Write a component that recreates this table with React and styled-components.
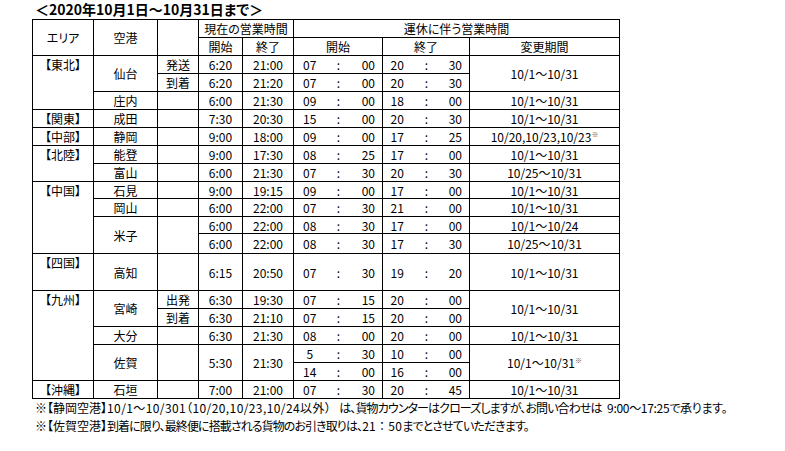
import React from "react";
import styled, { createGlobalStyle } from "styled-components";

const GlobalStyle = createGlobalStyle`
  body {
    margin: 0;
    background: #fff;
    color: #000;
    font-family: "Noto Sans CJK JP", sans-serif;
    font-feature-settings: "palt";
  }
`;

const Page = styled.div`
  width: 785px;
  height: 451px;
  padding-left: 32px;
  box-sizing: border-box;
  overflow: hidden;
`;

const Title = styled.div`
  height: 18px;
  padding: 1px 0 0 3px;
  font-size: 14px;
  font-weight: bold;
  line-height: 16px;
`;

const Table = styled.table`
  border-collapse: collapse;
  table-layout: fixed;
  width: 588px;
  font-size: 12px;
  line-height: 15px;
`;

const Row = styled.tr`
  height: ${p => p.$h || 18}px;
`;

const Th = styled.th`
  border: 1px solid #000;
  padding: 0;
  font-weight: normal;
  text-align: center;
  vertical-align: middle;
  white-space: nowrap;
`;

const Td = styled.td`
  border: 1px solid #000;
  padding: 0;
  text-align: center;
  vertical-align: ${p => (p.$top ? "top" : "middle")};
  padding-top: ${p => (p.$top ? "1px" : "0")};
  white-space: nowrap;
`;

const HourCell = styled(Td)`
  border-right: none;
`;

const ColonCell = styled(Td)`
  border-left: none;
  border-right: none;
`;

const MinCell = styled(Td)`
  border-left: none;
  text-align: right;
  padding-right: 7px;
`;

const Mark = styled.span`
  font-size: 7px;
  line-height: 0;
  vertical-align: 5px;
  color: #555;
`;

const Footer = styled.div`
  padding-left: 3px;
  font-size: 12px;
  line-height: 18px;
  white-space: nowrap;
`;

/* kana runs are narrower in the original font, digit runs wider */
const Tight = styled.span`
  letter-spacing: ${p => p.$ls ?? -0.9}px;
`;

const Num = styled.span`
  letter-spacing: ${p => p.$ls ?? 0.4}px;
  font-feature-settings: ${p => (p.$full ? "normal" : "palt")};
`;

const Clock = ({ h, m }) => (
  <>
    <HourCell>{h}</HourCell>
    <ColonCell>:</ColonCell>
    <MinCell>{m}</MinCell>
  </>
);

const widths = [61, 64, 41, 44, 51, 32, 26, 31, 29, 30, 28, 150];

export default function App() {
  return (
    <Page>
      <GlobalStyle />
      <Title>＜2020年10月1日～10月31日まで＞</Title>
      <Table>
        <colgroup>
          {widths.map((w, i) => (
            <col key={i} style={{ width: w }} />
          ))}
        </colgroup>
        <thead>
          <Row>
            <Th rowSpan={2}>エリア</Th>
            <Th rowSpan={2}>空港</Th>
            <Th rowSpan={2}></Th>
            <Th colSpan={2}>現在の営業時間</Th>
            <Th colSpan={7}>運休に伴う営業時間</Th>
          </Row>
          <Row>
            <Th>開始</Th>
            <Th>終了</Th>
            <Th colSpan={3}>開始</Th>
            <Th colSpan={3}>終了</Th>
            <Th>変更期間</Th>
          </Row>
        </thead>
        <tbody>
          <Row>
            <Td rowSpan={3} $top>【東北】</Td>
            <Td rowSpan={2}>仙台</Td>
            <Td>発送</Td>
            <Td>6:20</Td>
            <Td>21:00</Td>
            <Clock h="07" m="00" />
            <Clock h="20" m="30" />
            <Td rowSpan={2}>10/1～10/31</Td>
          </Row>
          <Row>
            <Td>到着</Td>
            <Td>6:20</Td>
            <Td>21:20</Td>
            <Clock h="07" m="00" />
            <Clock h="20" m="30" />
          </Row>
          <Row>
            <Td>庄内</Td>
            <Td></Td>
            <Td>6:00</Td>
            <Td>21:30</Td>
            <Clock h="09" m="00" />
            <Clock h="18" m="00" />
            <Td>10/1～10/31</Td>
          </Row>
          <Row>
            <Td $top>【関東】</Td>
            <Td>成田</Td>
            <Td></Td>
            <Td>7:30</Td>
            <Td>20:30</Td>
            <Clock h="15" m="00" />
            <Clock h="20" m="30" />
            <Td>10/1～10/31</Td>
          </Row>
          <Row>
            <Td $top>【中部】</Td>
            <Td>静岡</Td>
            <Td></Td>
            <Td>9:00</Td>
            <Td>18:00</Td>
            <Clock h="09" m="00" />
            <Clock h="17" m="25" />
            <Td>10/20,10/23,10/23<Mark>※</Mark></Td>
          </Row>
          <Row>
            <Td rowSpan={2} $top>【北陸】</Td>
            <Td>能登</Td>
            <Td></Td>
            <Td>9:00</Td>
            <Td>17:30</Td>
            <Clock h="08" m="25" />
            <Clock h="17" m="00" />
            <Td>10/1～10/31</Td>
          </Row>
          <Row>
            <Td>富山</Td>
            <Td></Td>
            <Td>6:00</Td>
            <Td>21:30</Td>
            <Clock h="07" m="30" />
            <Clock h="20" m="30" />
            <Td>10/25～10/31</Td>
          </Row>
          <Row $h={17}>
            <Td rowSpan={4} $top>【中国】</Td>
            <Td>石見</Td>
            <Td></Td>
            <Td>9:00</Td>
            <Td>19:15</Td>
            <Clock h="09" m="00" />
            <Clock h="17" m="00" />
            <Td>10/1～10/31</Td>
          </Row>
          <Row>
            <Td>岡山</Td>
            <Td></Td>
            <Td>6:00</Td>
            <Td>22:00</Td>
            <Clock h="07" m="30" />
            <Clock h="21" m="00" />
            <Td>10/1～10/31</Td>
          </Row>
          <Row $h={17}>
            <Td rowSpan={2}>米子</Td>
            <Td rowSpan={2}></Td>
            <Td>6:00</Td>
            <Td>22:00</Td>
            <Clock h="08" m="30" />
            <Clock h="17" m="00" />
            <Td>10/1～10/24</Td>
          </Row>
          <Row $h={20}>
            <Td>6:00</Td>
            <Td>22:00</Td>
            <Clock h="08" m="30" />
            <Clock h="17" m="30" />
            <Td>10/25～10/31</Td>
          </Row>
          <Row $h={37}>
            <Td $top>【四国】</Td>
            <Td>高知</Td>
            <Td></Td>
            <Td>6:15</Td>
            <Td>20:50</Td>
            <Clock h="07" m="30" />
            <Clock h="19" m="20" />
            <Td>10/1～10/31</Td>
          </Row>
          <Row>
            <Td rowSpan={5} $top>【九州】</Td>
            <Td rowSpan={2}>宮崎</Td>
            <Td>出発</Td>
            <Td>6:30</Td>
            <Td>19:30</Td>
            <Clock h="07" m="15" />
            <Clock h="20" m="00" />
            <Td rowSpan={2}>10/1～10/31</Td>
          </Row>
          <Row>
            <Td>到着</Td>
            <Td>6:30</Td>
            <Td>21:10</Td>
            <Clock h="07" m="15" />
            <Clock h="20" m="00" />
          </Row>
          <Row>
            <Td>大分</Td>
            <Td></Td>
            <Td>6:30</Td>
            <Td>21:30</Td>
            <Clock h="08" m="00" />
            <Clock h="20" m="00" />
            <Td>10/1～10/31</Td>
          </Row>
          <Row>
            <Td rowSpan={2}>佐賀</Td>
            <Td rowSpan={2}></Td>
            <Td rowSpan={2}>5:30</Td>
            <Td rowSpan={2}>21:30</Td>
            <Clock h="5" m="30" />
            <Clock h="10" m="00" />
            <Td rowSpan={2}>10/1～10/31<Mark>※</Mark></Td>
          </Row>
          <Row>
            <Clock h="14" m="00" />
            <Clock h="16" m="00" />
          </Row>
          <Row>
            <Td $top>【沖縄】</Td>
            <Td>石垣</Td>
            <Td></Td>
            <Td>7:00</Td>
            <Td>21:00</Td>
            <Clock h="07" m="30" />
            <Clock h="20" m="45" />
            <Td>10/1～10/31</Td>
          </Row>
        </tbody>
      </Table>
      <Footer>
        <div>
          ※【静岡空港】<Num>10/1～10/301（10/20,10/23,10/24以外）</Num>
          &nbsp;&nbsp;&nbsp;
          <Tight>は、貨物カウンターはクローズしますが、お問い合わせは</Tight>
          &nbsp;&nbsp;
          <Num $ls={-0.3}>9:00～17:25で承ります。</Num>
        </div>
        <div>
          ※【佐賀空港】<Tight>到着に限り、最終便に搭載される貨物のお引き取りは、</Tight>
          <Num $full $ls={0.3}>21：50</Num>
          <Tight>までとさせていただきます。</Tight>
        </div>
      </Footer>
    </Page>
  );
}
